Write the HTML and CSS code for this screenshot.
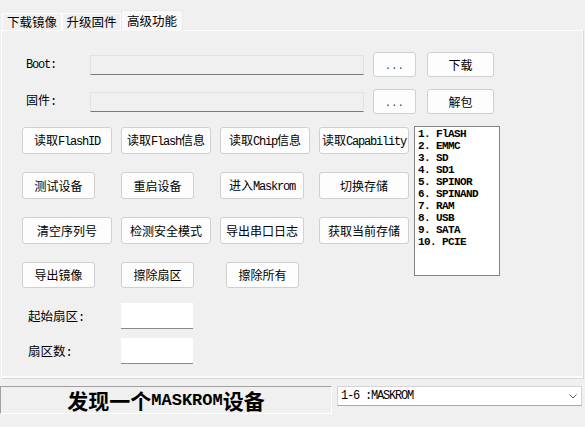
FILE: index.html
```html
<!DOCTYPE html>
<html lang="zh-CN">
<head>
<meta charset="utf-8">
<title>高级功能</title>
<link rel="stylesheet" href="styles.css">
</head>
<body>
<div class="tabs">
  <div class="tab t1">下载镜像</div>
  <div class="tab t2">升级固件</div>
  <div class="tab t3 active">高级功能</div>
</div>
<div class="panel">
  <div class="row">
    <div class="lbl"><span class="en">Boot:</span></div>
    <div class="field"></div>
    <button class="btn dots"><span class="en">...</span></button>
    <button class="btn act">下载</button>
  </div>
  <div class="row row2">
    <div class="lbl">固件<span class="en">:</span></div>
    <div class="field"></div>
    <button class="btn dots"><span class="en">...</span></button>
    <button class="btn act">解包</button>
  </div>
  <div class="main">
    <div class="grid">
      <button class="btn w90">读取<span class="en">FlashID</span></button>
      <button class="btn w90">读取<span class="en">Flash</span>信息</button>
      <button class="btn w90">读取<span class="en">Chip</span>信息</button>
      <button class="btn w90">读取<span class="en">Capability</span></button>
      <button class="btn w73">测试设备</button>
      <button class="btn w73">重启设备</button>
      <button class="btn w84">进入<span class="en">Maskrom</span></button>
      <button class="btn w90">切换存储</button>
      <button class="btn w90">清空序列号</button>
      <button class="btn w90">检测安全模式</button>
      <button class="btn w84">导出串口日志</button>
      <button class="btn w90">获取当前存储</button>
      <button class="btn w73 short">导出镜像</button>
      <button class="btn w73 short">擦除扇区</button>
      <button class="btn w73 short shift">擦除所有</button>
    </div>
    <div class="list">
      <div>1. FlASH</div>
      <div>2. EMMC</div>
      <div>3. SD</div>
      <div>4. SD1</div>
      <div>5. SPINOR</div>
      <div>6. SPINAND</div>
      <div>7. RAM</div>
      <div>8. USB</div>
      <div>9. SATA</div>
      <div>10. PCIE</div>
    </div>
  </div>
  <div class="srow first">
    <div class="slbl">起始扇区<span class="en">:</span></div>
    <div class="input"></div>
  </div>
  <div class="srow">
    <div class="slbl">扇区数<span class="en">:</span></div>
    <div class="input"></div>
  </div>
</div>
<div class="bottom">
  <div class="status"><span class="cjk">发现一个</span><span class="stEn">MASKROM</span><span class="cjk">设备</span></div>
  <div class="combo">
    <span class="comboText">1-6 :MASKROM</span>
    <svg class="chev" width="8" height="5" viewBox="0 0 8 5"><polyline points="0.5,0.5 4,4 7.5,0.5" fill="none" stroke="#606060" stroke-width="1"/></svg>
  </div>
</div>
</body>
</html>
```
FILE: styles.css
```css
* { box-sizing: border-box; }
html, body { margin: 0; padding: 0; }
body {
  width: 585px;
  height: 427px;
  overflow: hidden;
  background: #f0f0f0;
  font-family: "Noto Sans CJK SC", sans-serif;
  font-size: 12px;
  color: #000;
}
.en {
  font-family: "Liberation Mono", monospace;
  font-size: 12px;
  letter-spacing: -1.2px;
}
.tabs {
  display: flex;
  align-items: flex-end;
  height: 30px;
  padding-left: 2px;
}
.tab {
  height: 17px;
  line-height: 15px;
  text-align: center;
  background: #f0f0f0;
  border: 1px solid #fcfcfc;
  border-bottom: none;
  font-size: 12.5px;
}
.t1 { width: 60px; }
.t2 { width: 59px; }
.t3 { width: 62px; }
.tab.active {
  height: 21px;
  line-height: 19px;
  background: #f9f9f9;
  border-color: #e8e8e8;
  margin-bottom: -1px;
  position: relative;
  z-index: 1;
}
.panel {
  margin-left: 1px;
  width: 583px;
  height: 349px;
  border-left: 1px solid #fdfdfd;
  border-top: 1px solid #fdfdfd;
  border-right: 1px solid #d8d8d8;
  border-bottom: 1px solid #d8d8d8;
  box-shadow: inset -1px -2px 0 #fbfbfb;
  padding: 21px 0 0 20px;
}
.row {
  display: flex;
  align-items: center;
  height: 25px;
}
.row2 { margin-top: 12px; }
.lbl {
  width: 68px;
  padding-left: 4px;
  padding-bottom: 4px;
  white-space: nowrap;
}
.field {
  width: 274px;
  height: 20px;
  background: #f0f0f0;
  border: 1px solid #e2e2e2;
  border-bottom: 1px solid #7a7a7a;
  margin-right: 9px;
}
.btn {
  font: inherit;
  color: #000;
  background: #fdfdfd;
  border: 1px solid #d0d0d0;
  border-radius: 3px;
  padding: 0;
  margin: 0;
  height: 27px;
  text-align: center;
  white-space: nowrap;
  line-height: 1;
}
.row .btn { height: 25px; }
.dots { width: 43px; margin-right: 11px; }
.dots .en { color: #333; letter-spacing: 0.3px; font-size: 10px; }
.act { width: 67px; }
.main {
  display: flex;
  margin-top: 13px;
}
.grid {
  display: grid;
  grid-template-columns: 99px 99px 99px 95px;
  grid-auto-rows: 27px;
  row-gap: 18px;
  align-items: start;
}
.w90 { width: 90px; }
.w84 { width: 84px; }
.w73 { width: 73px; }
.short { height: 26px; }
.shift { margin-left: 6px; }
.list {
  margin-top: -1px;
  width: 86px;
  height: 150px;
  background: #fff;
  border: 1px solid #838383;
  padding: 1px 3px;
  font-family: "Liberation Mono", monospace;
  font-size: 11px;
  font-weight: bold;
  letter-spacing: -0.6px;
  line-height: 12px;
  white-space: nowrap;
}
.srow {
  display: flex;
  align-items: center;
  height: 26px;
  margin-top: 9px;
}
.srow.first { margin-top: 14px; }
.slbl {
  width: 99px;
  padding-left: 6px;
  padding-bottom: 2px;
  font-size: 12.5px;
}
.input {
  width: 72px;
  height: 26px;
  background: #fff;
  border-bottom: 1px solid #8a8a8a;
}
.bottom {
  display: flex;
  align-items: flex-start;
  margin-top: 7px;
}
.status {
  width: 332px;
  height: 28px;
  border-top: 1px solid #a0a0a0;
  border-left: 1px solid #a0a0a0;
  border-right: 1px solid #fff;
  border-bottom: 1px solid #fff;
  display: flex;
  align-items: center;
  justify-content: center;
  font-weight: bold;
}
.status .cjk { font-size: 21px; }
.stEn {
  font-family: "Liberation Mono", monospace;
  font-size: 17px;
  font-weight: bold;
}
.combo {
  margin-left: 5px;
  width: 245px;
  height: 20px;
  background: #fff;
  border: 1px solid #d4d4d4;
  border-bottom-color: #a8a8a8;
  display: flex;
  align-items: center;
  justify-content: space-between;
  padding: 0 4px 0 3px;
}
.comboText {
  font-family: "Liberation Mono", monospace;
  font-size: 12px;
  letter-spacing: -1.2px;
  white-space: pre;
}
.chev { display: block; }
```
